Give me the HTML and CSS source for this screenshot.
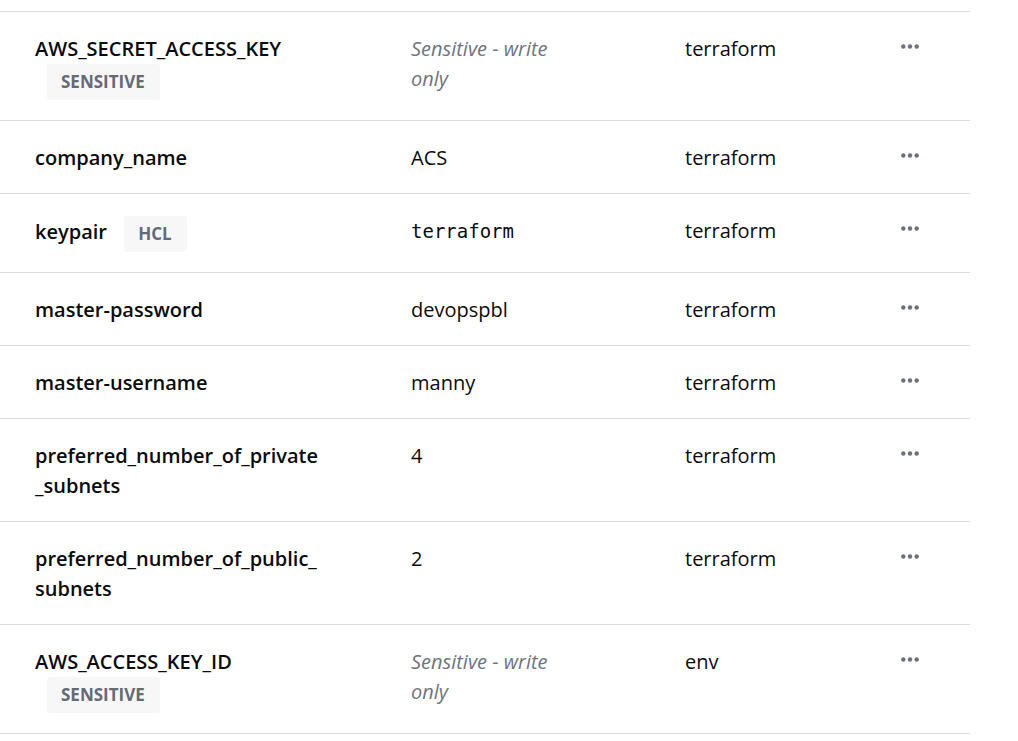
FILE: index.html
```html
<!DOCTYPE html>
<html lang="en">
<head>
<meta charset="utf-8">
<title>Variables</title>
<link rel="stylesheet" href="styles.css">
</head>
<body>
<div class="vars">
  <div class="row">
    <div class="name">AWS_SECRET_ACCESS_KEY <span class="badge">Sensitive</span></div>
    <div class="value"><span class="secret">Sensitive - write only</span></div>
    <div class="cat">terraform</div>
    <div class="act"><svg class="dots" width="18" height="5" viewBox="0 0 18 5"><circle cx="2.3" cy="2.5" r="2.2"/><circle cx="9" cy="2.5" r="2.2"/><circle cx="15.7" cy="2.5" r="2.2"/></svg></div>
  </div>
  <div class="row">
    <div class="name">company_name</div>
    <div class="value">ACS</div>
    <div class="cat">terraform</div>
    <div class="act"><svg class="dots" width="18" height="5" viewBox="0 0 18 5"><circle cx="2.3" cy="2.5" r="2.2"/><circle cx="9" cy="2.5" r="2.2"/><circle cx="15.7" cy="2.5" r="2.2"/></svg></div>
  </div>
  <div class="row">
    <div class="name">keypair <span class="badge">HCL</span></div>
    <div class="value"><code class="code">terraform</code></div>
    <div class="cat">terraform</div>
    <div class="act"><svg class="dots" width="18" height="5" viewBox="0 0 18 5"><circle cx="2.3" cy="2.5" r="2.2"/><circle cx="9" cy="2.5" r="2.2"/><circle cx="15.7" cy="2.5" r="2.2"/></svg></div>
  </div>
  <div class="row">
    <div class="name">master-password</div>
    <div class="value">devopspbl</div>
    <div class="cat">terraform</div>
    <div class="act"><svg class="dots" width="18" height="5" viewBox="0 0 18 5"><circle cx="2.3" cy="2.5" r="2.2"/><circle cx="9" cy="2.5" r="2.2"/><circle cx="15.7" cy="2.5" r="2.2"/></svg></div>
  </div>
  <div class="row">
    <div class="name">master-username</div>
    <div class="value">manny</div>
    <div class="cat">terraform</div>
    <div class="act"><svg class="dots" width="18" height="5" viewBox="0 0 18 5"><circle cx="2.3" cy="2.5" r="2.2"/><circle cx="9" cy="2.5" r="2.2"/><circle cx="15.7" cy="2.5" r="2.2"/></svg></div>
  </div>
  <div class="row">
    <div class="name">preferred_number_of_private_subnets</div>
    <div class="value">4</div>
    <div class="cat">terraform</div>
    <div class="act"><svg class="dots" width="18" height="5" viewBox="0 0 18 5"><circle cx="2.3" cy="2.5" r="2.2"/><circle cx="9" cy="2.5" r="2.2"/><circle cx="15.7" cy="2.5" r="2.2"/></svg></div>
  </div>
  <div class="row">
    <div class="name">preferred_number_of_public_subnets</div>
    <div class="value">2</div>
    <div class="cat">terraform</div>
    <div class="act"><svg class="dots" width="18" height="5" viewBox="0 0 18 5"><circle cx="2.3" cy="2.5" r="2.2"/><circle cx="9" cy="2.5" r="2.2"/><circle cx="15.7" cy="2.5" r="2.2"/></svg></div>
  </div>
  <div class="row">
    <div class="name">AWS_ACCESS_KEY_ID <span class="badge">Sensitive</span></div>
    <div class="value"><span class="secret">Sensitive - write only</span></div>
    <div class="cat">env</div>
    <div class="act"><svg class="dots" width="18" height="5" viewBox="0 0 18 5"><circle cx="2.3" cy="2.5" r="2.2"/><circle cx="9" cy="2.5" r="2.2"/><circle cx="15.7" cy="2.5" r="2.2"/></svg></div>
  </div>
</div>
</body>
</html>
```

FILE: styles.css
```css
* { box-sizing: border-box; }

html, body {
  margin: 0;
  background: #ffffff;
}

body {
  font-family: "Open Sans", "Noto Sans", sans-serif;
  font-size: 20px;
  color: #0b0b0d;
  padding-top: 11px;
}

.vars {
  width: 970px;
  border-top: 1px solid #dcdcdc;
}

.row {
  display: grid;
  grid-template-columns: 376px 274px 216px 1fr;
  align-items: start;
  padding: 22px 0 20px 35px;
  border-bottom: 1px solid #dcdcdc;
  line-height: 30px;
}

.name {
  font-weight: 600;
  width: 286px;
  word-break: break-all;
}

.badge {
  display: inline-block;
  margin-left: 12px;
  padding: 8px 15px 8px 14px;
  line-height: 20px;
  font-size: 17px;
  font-weight: 700;
  text-transform: uppercase;
  color: #666a76;
  background: #f7f7f8;
  border-radius: 3px;
  vertical-align: middle;
  word-break: normal;
}

.value {
  max-width: 160px;
}

.secret {
  font-style: italic;
  color: #6f7480;
}

.code {
  font-family: "DejaVu Sans Mono", "Liberation Mono", monospace;
  font-size: 19px;
}

.act {
  padding-top: 8px;
  line-height: 0;
}

.dots {
  fill: #6c707c;
}
```
